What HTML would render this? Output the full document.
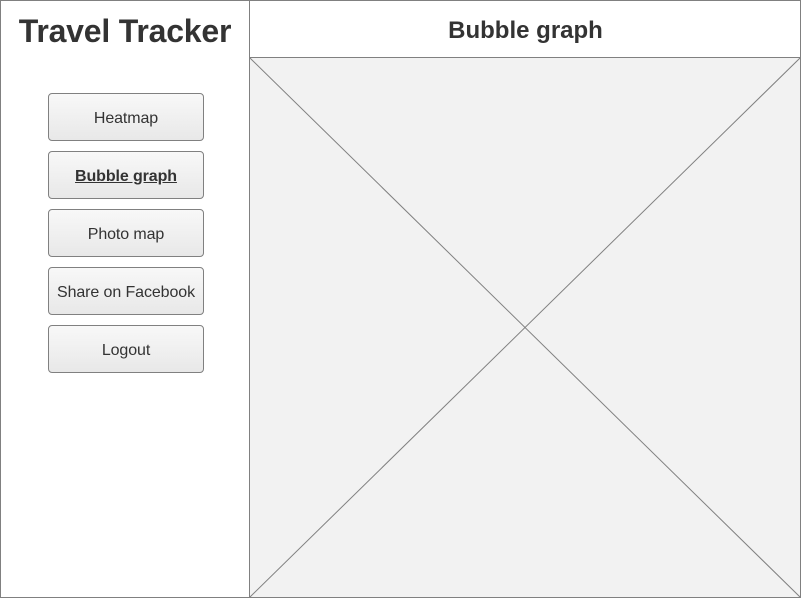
<!DOCTYPE html>
<html><head><style>
*{margin:0;padding:0;box-sizing:border-box}
body{width:801px;height:598px;position:relative;background:#fff;font-family:"Liberation Sans",sans-serif;color:#333;overflow:hidden}
.frame{position:absolute;left:0;top:0;width:801px;height:598px;border:1px solid #808080}
.vl{position:absolute;left:249px;top:0;width:1px;height:598px;background:#808080}
.hl{position:absolute;left:249px;top:57px;width:552px;height:1px;background:#808080}
h1{position:absolute;left:0;width:250px;top:13px;text-align:center;font-size:32px;font-weight:bold;color:#333;letter-spacing:-0.2px}
h2{position:absolute;left:250px;width:551px;top:17px;text-align:center;font-size:24px;font-weight:bold;color:#333}
.btn{position:absolute;left:48px;width:156px;height:48px;border:1px solid #808080;border-radius:4px;background:linear-gradient(#f8f8f8,#e8e8e8);font-size:16px;text-align:center;line-height:49px;color:#333;letter-spacing:-0.1px}
.sel{font-weight:bold;text-decoration:underline}
svg{position:absolute;left:250px;top:58px}
</style></head><body>
<svg width="550" height="539"><rect width="550" height="539" fill="#f2f2f2"/><line x1="0" y1="0" x2="550" y2="539" stroke="#808080"/><line x1="550" y1="0" x2="0" y2="539" stroke="#808080"/></svg>
<div class="frame"></div><div class="vl"></div><div class="hl"></div>
<h1>Travel Tracker</h1>
<h2>Bubble graph</h2>
<div class="btn" style="top:93px">Heatmap</div>
<div class="btn sel" style="top:151px">Bubble graph</div>
<div class="btn" style="top:209px">Photo map</div>
<div class="btn" style="top:267px">Share on Facebook</div>
<div class="btn" style="top:325px">Logout</div>
</body></html>
